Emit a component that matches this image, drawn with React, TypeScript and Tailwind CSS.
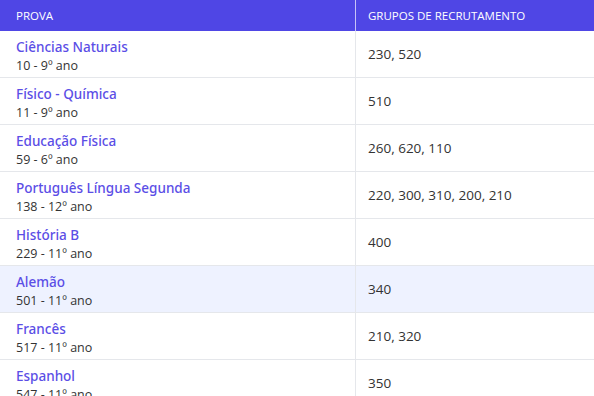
const rows = [
  { name: "Ciências Naturais", code: "10 - 9º ano", groups: "230, 520" },
  { name: "Físico - Química", code: "11 - 9º ano", groups: "510" },
  { name: "Educação Física", code: "59 - 6º ano", groups: "260, 620, 110" },
  { name: "Português Língua Segunda", code: "138 - 12º ano", groups: "220, 300, 310, 200, 210" },
  { name: "História B", code: "229 - 11º ano", groups: "400" },
  { name: "Alemão", code: "501 - 11º ano", groups: "340", active: true },
  { name: "Francês", code: "517 - 11º ano", groups: "210, 320" },
  { name: "Espanhol", code: "547 - 11º ano", groups: "350" },
]

export default function App() {
  return (
    <div className="h-[396px] w-[594px] overflow-hidden bg-white font-['Open_Sans',sans-serif]">
      <div className="grid h-[31px] grid-cols-[356px_1fr] bg-[#4f46e5] text-[11.5px] font-medium uppercase leading-[31px] text-white">
        <div className="border-r border-[#c7c3f7] pl-4">Prova</div>
        <div className="pl-3">Grupos de Recrutamento</div>
      </div>
      {rows.map((r) => (
        <div
          key={r.name}
          className={"grid h-[47px] grid-cols-[356px_1fr] border-b border-[#e5e7eb] " + (r.active ? "bg-[#eef2ff]" : "")}
        >
          <div className="border-r border-[#e5e7eb] pl-4 pt-[6px]">
            <div className="font-['Noto_Sans',sans-serif] text-[13.5px] leading-[20px] font-medium text-[#5b4ee6]">{r.name}</div>
            <div className="text-[12.5px] leading-[17px] text-[#333]">{r.code}</div>
          </div>
          <div className="flex items-center pl-3 pt-[1px] text-[13.5px] text-[#333]">{r.groups}</div>
        </div>
      ))}
    </div>
  )
}
